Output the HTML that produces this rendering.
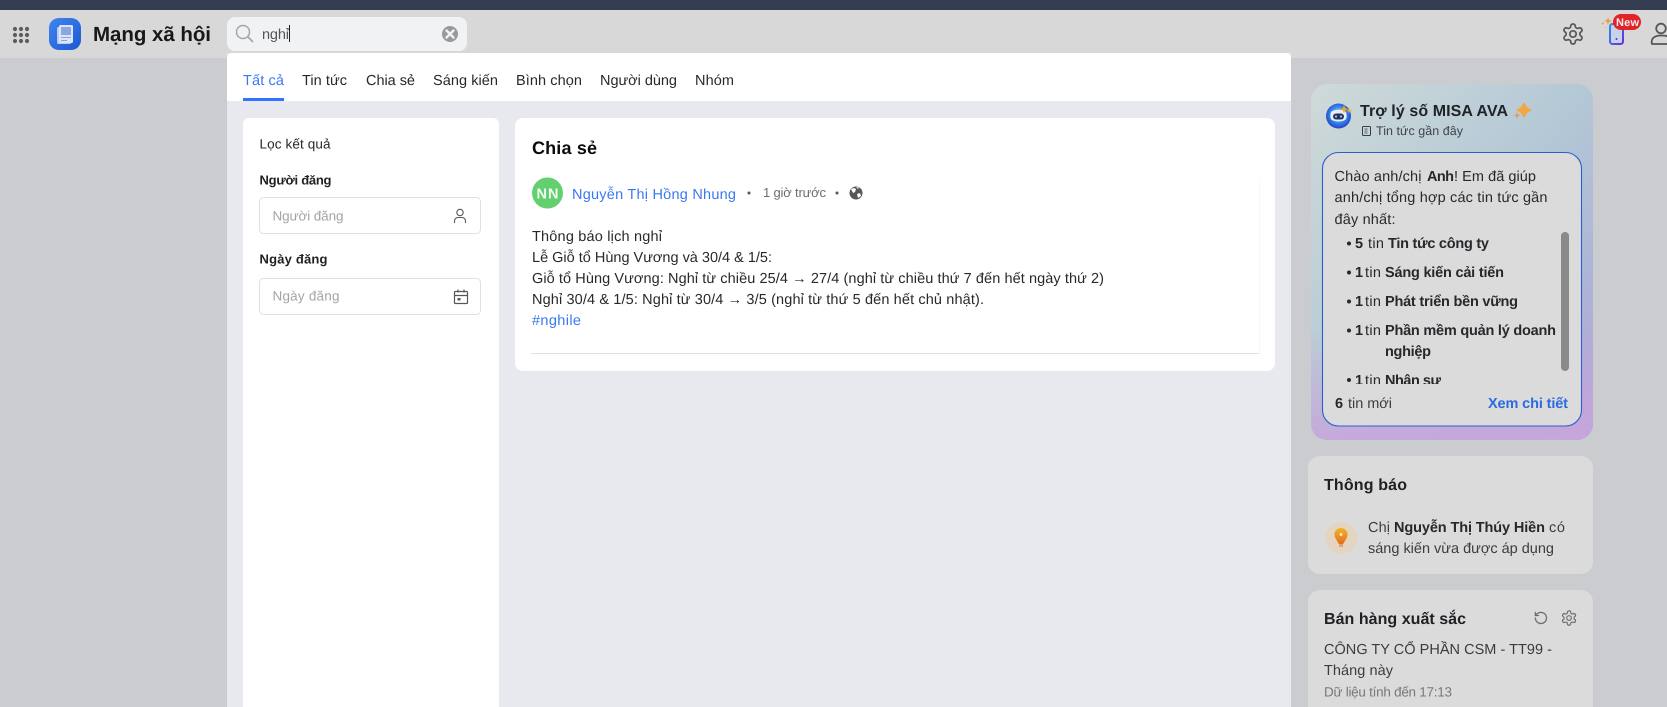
<!DOCTYPE html>
<html lang="vi"><head><meta charset="utf-8"><title>Mạng xã hội</title>
<style>
html,body{margin:0;padding:0;width:1667px;height:707px;overflow:hidden;background:#cbccd0}
svg{display:block}
text{font-family:"Liberation Sans",Arial,sans-serif;font-size:14.5px;fill:#26282c;text-rendering:geometricPrecision}
.b{font-weight:700}
.g{fill:#6b6d72}
.ph{fill:#a2a4a8}
.s{font-size:13.5px}
.bs{font-size:13px}
.blue{fill:#3a78f2}
</style></head><body>
<svg width="1667" height="707" viewBox="0 0 1667 707" xmlns="http://www.w3.org/2000/svg">
<defs>
<linearGradient id="ava" x1="0" y1="0" x2="1" y2="1"><stop offset="0" stop-color="#cfdad9"/><stop offset=".5" stop-color="#b3c8d6"/><stop offset=".75" stop-color="#acb6d6"/><stop offset="1" stop-color="#b8a0d6"/></linearGradient>
<linearGradient id="ava2" x1="0" y1="0" x2="0" y2="1"><stop offset=".7" stop-color="#c8a6dc" stop-opacity="0"/><stop offset="1" stop-color="#c8a6dc" stop-opacity=".9"/></linearGradient>
<linearGradient id="logo" x1="0" y1="0" x2="1" y2="1"><stop offset="0" stop-color="#3e86ee"/><stop offset="1" stop-color="#1d58d2"/></linearGradient>
<linearGradient id="ph" x1="0" y1="0" x2="1" y2="1"><stop offset="0" stop-color="#2f8fe0"/><stop offset="1" stop-color="#6a2fe0"/></linearGradient>
<radialGradient id="bot" cx=".5" cy=".45" r=".55"><stop offset="0" stop-color="#bfe3ff"/><stop offset=".6" stop-color="#2f86ee"/><stop offset="1" stop-color="#2a3fc4"/></radialGradient>
<linearGradient id="bulb" x1="0" y1="0" x2="0" y2="1"><stop offset="0" stop-color="#f2b420"/><stop offset="1" stop-color="#e56b20"/></linearGradient>
<clipPath id="listclip"><rect x="1330" y="160" width="235" height="224"/></clipPath>
</defs>

<!-- page -->
<rect width="1667" height="707" fill="#cbccd0"/>
<rect width="1667" height="58" fill="#d8d8d8"/>
<rect width="1667" height="10" fill="#343d50"/>

<!-- grid -->
<g fill="#5d5d5d"><circle cx="15" cy="29" r="2.100"/><circle cx="21" cy="29" r="2.100"/><circle cx="27" cy="29" r="2.100"/><circle cx="15" cy="35" r="2.100"/><circle cx="21" cy="35" r="2.100"/><circle cx="27" cy="35" r="2.100"/><circle cx="15" cy="41" r="2.100"/><circle cx="21" cy="41" r="2.100"/><circle cx="27" cy="41" r="2.100"/></g>

<!-- logo -->
<rect x="49" y="18" width="32" height="32" rx="10" fill="url(#logo)"/>
<rect x="57" y="27" width="14" height="17" rx="1.500" fill="#b9cdf3"/>
<rect x="59" y="25" width="14" height="18" rx="1.500" fill="#dbe5f8"/>
<rect x="61" y="27" width="10" height="8" fill="#8da6e2"/>
<rect x="61" y="37" width="10" height="1" fill="#8da6e2"/>
<rect x="61" y="40" width="6" height="1" fill="#8da6e2"/>

<text x="93" y="41" class="b" style="font-size:20.500px;fill:#17181a" textLength="118">Mạng xã hội</text>

<!-- search -->
<rect x="227" y="17" width="240" height="34" rx="8" fill="#f1f2f4"/>
<circle cx="243" cy="32" r="6.500" fill="none" stroke="#a6a6a6" stroke-width="1.500"/>
<path d="M248 37l4.500 4.500" stroke="#a6a6a6" stroke-width="1.700" stroke-linecap="round"/>
<text x="262" y="39" style="fill:#555" textLength="27">nghỉ</text>
<rect x="289" y="25" width="1" height="17" fill="#222"/>
<circle cx="450" cy="34" r="8" fill="#999"/>
<path d="M446.500 30.500l7 7M453.500 30.500l-7 7" stroke="#f1f2f4" stroke-width="2.400" stroke-linecap="round"/>

<!-- header right icons -->
<g transform="translate(1561 22)" fill="none" stroke="#55575b" stroke-width="1.700" stroke-linejoin="round">
<path d="M12.220 2h-.44a2 2 0 0 0-2 2v.18a2 2 0 0 1-1 1.730l-.43.25a2 2 0 0 1-2 0l-.15-.08a2 2 0 0 0-2.730.73l-.22.38a2 2 0 0 0 .73 2.730l.15.1a2 2 0 0 1 1 1.720v.51a2 2 0 0 1-1 1.740l-.15.09a2 2 0 0 0-.73 2.730l.22.38a2 2 0 0 0 2.730.73l.15-.08a2 2 0 0 1 2 0l.43.25a2 2 0 0 1 1 1.730V20a2 2 0 0 0 2 2h.44a2 2 0 0 0 2-2v-.18a2 2 0 0 1 1-1.730l.43-.25a2 2 0 0 1 2 0l.15.08a2 2 0 0 0 2.730-.73l.22-.39a2 2 0 0 0-.73-2.730l-.15-.08a2 2 0 0 1-1-1.740v-.5a2 2 0 0 1 1-1.740l.15-.09a2 2 0 0 0 .73-2.730l-.22-.38a2 2 0 0 0-2.730-.73l-.15.08a2 2 0 0 1-2 0l-.43-.25a2 2 0 0 1-1-1.730V4a2 2 0 0 0-2-2z"/>
<circle cx="12" cy="12" r="3.200"/>
</g>
<rect x="1610" y="24" width="13" height="20" rx="2.500" fill="#c6d3ec" stroke="url(#ph)" stroke-width="2"/>
<circle cx="1616.500" cy="39" r="1" fill="#3f3fe0"/>
<path d="M1608 17l1 3 3 1-3 1-1 3-1-3-3-1 3-1z" fill="#ee9a4a"/>
<circle cx="1603" cy="23.500" r="1" fill="#ee9a4a"/><circle cx="1606" cy="27.500" r=".8" fill="#f0b090"/>
<rect x="1613" y="14" width="28" height="16" rx="8" fill="#e0242a"/>
<text x="1616" y="26" class="b" style="font-size:11px;fill:#f4eded" textLength="23">New</text>
<g fill="none" stroke="#55575b" stroke-width="1.800"><circle cx="1661" cy="28.500" r="4.800"/><path d="M1652 44c-1.500-5 2-8.500 9-8.500s15 2 15 8.500z"/></g>

<!-- panel -->
<rect x="227" y="53" width="1064" height="654" fill="#e8e9ee"/>
<path d="M227 101V58a5 5 0 0 1 5-5h1054a5 5 0 0 1 5 5v43z" fill="#fff"/>
<text x="243" y="85" style="fill:#3a78f2" textLength="41">Tất cả</text>
<text x="302" y="85" textLength="45">Tin tức</text>
<text x="366" y="85" textLength="49">Chia sẻ</text>
<text x="433" y="85" textLength="65">Sáng kiến</text>
<text x="516" y="85" textLength="66">Bình chọn</text>
<text x="600" y="85" textLength="77">Người dùng</text>
<text x="695" y="85" textLength="39">Nhóm</text>
<rect x="243" y="98" width="41" height="3" fill="#2f74ff"/>

<!-- filter -->
<path d="M243 707V124a6 6 0 0 1 6-6h244a6 6 0 0 1 6 6v583z" fill="#fff"/>
<text x="259.500" y="148.500" class="s" textLength="71">Lọc kết quả</text>
<text x="259.500" y="184.500" class="b bs" style="fill:#1e2024" textLength="72">Người đăng</text>
<rect x="259.500" y="197.500" width="221" height="36" rx="4" fill="#fff" stroke="#dfe0e4"/>
<text x="272.500" y="220.500" class="ph s" textLength="71">Người đăng</text>
<g fill="none" stroke="#55575b" stroke-width="1.100"><circle cx="460" cy="212.500" r="3.200"/><path d="M454.500 223v-2a3.500 3.500 0 0 1 3.500-3.500h4a3.500 3.500 0 0 1 3.500 3.500v2"/></g>
<text x="259.500" y="263.500" class="b bs" style="fill:#1e2024" textLength="68">Ngày đăng</text>
<rect x="259.500" y="278.500" width="221" height="36" rx="4" fill="#fff" stroke="#dfe0e4"/>
<text x="272.500" y="300.500" class="ph s" textLength="67">Ngày đăng</text>
<g fill="none" stroke="#55575b" stroke-width="1.200"><rect x="454.500" y="291.500" width="13" height="12" rx="1"/><path d="M454.500 295.500h13M458 289.500v3M464 289.500v3"/></g>
<rect x="457.500" y="298" width="3" height="2.500" fill="#55575b"/>

<!-- main card -->
<rect x="515" y="118" width="760" height="253" rx="8" fill="#fff"/>
<text x="532" y="154" class="b" style="font-size:18px;fill:#0c0c0e" textLength="65">Chia sẻ</text>
<circle cx="547.500" cy="193" r="15.500" fill="#62d06f"/>
<text x="536.500" y="198.500" class="b" style="font-size:14.500px;fill:#f3fbf4" textLength="22">NN</text>
<text x="572" y="199" class="blue" textLength="164">Nguyễn Thị Hồng Nhung</text>
<circle cx="749" cy="193" r="1.500" fill="#555"/>
<text x="763" y="197" class="g bs" textLength="63">1 giờ trước</text>
<circle cx="837" cy="193" r="1.500" fill="#555"/>
<circle cx="856" cy="193" r="6.500" fill="#55575b"/>
<path d="M851 189l3-1 2 1-1 3-2 1zM857 194l3-1 1 3-3 2zM856 187l3 .5-1 1.500z" fill="#fff"/>
<text x="532" y="241" textLength="130">Thông báo lịch nghỉ</text>
<text x="532" y="262" textLength="240">Lễ Giỗ tổ Hùng Vương và 30/4 &amp; 1/5:</text>
<text x="532" y="283" textLength="572">Giỗ tổ Hùng Vương: Nghỉ từ chiều 25/4 → 27/4 (nghỉ từ chiều thứ 7 đến hết ngày thứ 2)</text>
<text x="532" y="304" textLength="452">Nghỉ 30/4 &amp; 1/5: Nghỉ từ 30/4 → 3/5 (nghỉ từ thứ 5 đến hết chủ nhật).</text>
<text x="532" y="325" class="blue" textLength="49">#nghile</text>
<rect x="531" y="353" width="728" height="1" fill="#dfe0e3"/>
<rect x="1259" y="179" width="1" height="175" fill="#f8f8f9"/>

<!-- AVA card -->
<rect x="1311" y="84" width="282" height="356" rx="16" fill="url(#ava)"/>
<rect x="1311" y="84" width="282" height="356" rx="16" fill="url(#ava2)"/>
<circle cx="1338.500" cy="116" r="12.500" fill="url(#bot)"/>
<path d="M1331 112c3-3 12-3 15 0 1 3 1 7-1 8-3 2-10 2-13 0-2-1-2-5-1-8z" fill="#e6eef8"/>
<rect x="1333" y="113.500" width="11" height="6" rx="3" fill="#26325a"/>
<circle cx="1336" cy="116.500" r="1.100" fill="#8fc0ff"/><circle cx="1341" cy="116.500" r="1.100" fill="#8fc0ff"/>
<path d="M1344 105l1.200 3 3 1.200-3 1.200-1.200 3-1.200-3-3-1.200 3-1.200z" fill="#eeaa20"/>
<path d="M1349 108l.8 2 2 .8-2 .8-.8 2-.8-2-2-.8 2-.8z" fill="#eeaa20"/>
<text x="1360" y="116" class="b" style="font-size:16px;fill:#1f2226" textLength="148">Trợ lý số MISA AVA</text>
<path d="M1524 102l3 5 5 3-5 3-3 5-3-5-5-3 5-3z" fill="#efa845"/>
<path d="M1517 112l1 2.500 2.500 1-2.500 1-1 2.500-1-2.500-2.500-1 2.500-1z" fill="#e89a60"/>
<rect x="1362.500" y="126.500" width="8" height="9" rx="1" fill="none" stroke="#3a3d42"/>
<path d="M1364.500 129h3M1364.500 131h3M1364.500 133h3" stroke="#3a3d42" stroke-width=".8"/>
<text x="1376" y="135" style="font-size:12.500px;fill:#40444a" textLength="87">Tin tức gần đây</text>

<rect x="1322.500" y="152.500" width="259" height="273.500" rx="16" fill="#dbdbdb" stroke="#2c5ed0" stroke-width="1.100"/>
<text x="1334.500" y="181" textLength="87">Chào anh/chị</text>
<text x="1427" y="181" class="b" textLength="27">Anh</text>
<text x="1454" y="181" textLength="82">! Em đã giúp</text>
<text x="1334.500" y="202" textLength="213">anh/chị tổng hợp các tin tức gần</text>
<text x="1334.500" y="224" textLength="61">đây nhất:</text>
<g clip-path="url(#listclip)">
<circle cx="1349" cy="243.500" r="2" fill="#26282c"/>
<text x="1355" y="248" class="b" textLength="8">5</text>
<text x="1368" y="248" textLength="16">tin</text>
<text x="1388" y="248" class="b" textLength="101">Tin tức công ty</text>
<circle cx="1349" cy="272.500" r="2" fill="#26282c"/>
<text x="1355" y="277" class="b" textLength="6">1</text>
<text x="1365" y="277" textLength="16">tin</text>
<text x="1385" y="277" class="b" textLength="119">Sáng kiến cải tiến</text>
<circle cx="1349" cy="301.500" r="2" fill="#26282c"/>
<text x="1355" y="306" class="b" textLength="6">1</text>
<text x="1365" y="306" textLength="16">tin</text>
<text x="1385" y="306" class="b" textLength="133">Phát triển bền vững</text>
<circle cx="1349" cy="330.500" r="2" fill="#26282c"/>
<text x="1355" y="335" class="b" textLength="6">1</text>
<text x="1365" y="335" textLength="16">tin</text>
<text x="1385" y="335" class="b" textLength="171">Phần mềm quản lý doanh</text>
<text x="1385" y="356" class="b" textLength="46">nghiệp</text>
<circle cx="1349" cy="380" r="2" fill="#26282c"/>
<text x="1355" y="385" class="b" textLength="6">1</text>
<text x="1365" y="385" textLength="16">tin</text>
<text x="1385" y="385" class="b" textLength="56">Nhân sự</text>
</g>
<rect x="1561" y="232" width="8" height="139" rx="4" fill="#8a8a8a"/>
<text x="1335" y="408" class="b" textLength="9">6</text>
<text x="1348" y="408" style="fill:#3a3c40" textLength="44">tin mới</text>
<text x="1488" y="408" class="b" style="fill:#2c6ae0" textLength="80">Xem chi tiết</text>

<!-- Thông báo -->
<rect x="1308" y="456" width="285" height="118" rx="12" fill="#dbdbdb"/>
<text x="1324" y="490" class="b" style="font-size:16px;fill:#1f2024" textLength="83">Thông báo</text>
<circle cx="1341" cy="538" r="16" fill="#e3d5bf"/>
<path d="M1341 528c-4 0-6.500 3-6.500 6.500 0 4 3.500 7 4.500 10h4c1-3 4.500-6 4.500-10 0-3.500-2.500-6.500-6.500-6.500z" fill="url(#bulb)"/>
<circle cx="1341" cy="534.500" r="1.500" fill="#f8e8d0"/>
<rect x="1339" y="545" width="4" height="2" fill="#e6a07a"/>
<text x="1368" y="532" style="fill:#3a3c40" textLength="22">Chị</text>
<text x="1394" y="532" class="b" textLength="151">Nguyễn Thị Thúy Hiền</text>
<text x="1549" y="532" style="fill:#3a3c40" textLength="16">có</text>
<text x="1368" y="553" style="fill:#3a3c40" textLength="186">sáng kiến vừa được áp dụng</text>

<!-- Bán hàng -->
<path d="M1308 707V602a12 12 0 0 1 12-12h261a12 12 0 0 1 12 12v105z" fill="#dbdbdb"/>
<text x="1324" y="624" class="b" style="font-size:16px;fill:#1f2024" textLength="142">Bán hàng xuất sắc</text>
<g transform="translate(1533.500 610.500) scale(.62)" fill="none" stroke="#6a6c70" stroke-width="2" stroke-linecap="round" stroke-linejoin="round"><path d="M3 12a9 9 0 1 0 9-9 9.750 9.750 0 0 0-6.740 2.740L3 8"/><path d="M3 3v5h5"/></g>
<g transform="translate(1560.400 609.400) scale(.72)" fill="none" stroke="#6a6c70" stroke-width="1.600" stroke-linejoin="round">
<path d="M12.220 2h-.44a2 2 0 0 0-2 2v.18a2 2 0 0 1-1 1.730l-.43.25a2 2 0 0 1-2 0l-.15-.08a2 2 0 0 0-2.730.73l-.22.38a2 2 0 0 0 .73 2.730l.15.1a2 2 0 0 1 1 1.720v.51a2 2 0 0 1-1 1.740l-.15.09a2 2 0 0 0-.73 2.730l.22.38a2 2 0 0 0 2.730.73l.15-.08a2 2 0 0 1 2 0l.43.25a2 2 0 0 1 1 1.730V20a2 2 0 0 0 2 2h.44a2 2 0 0 0 2-2v-.18a2 2 0 0 1 1-1.730l.43-.25a2 2 0 0 1 2 0l.15.08a2 2 0 0 0 2.730-.73l.22-.39a2 2 0 0 0-.73-2.730l-.15-.08a2 2 0 0 1-1-1.740v-.5a2 2 0 0 1 1-1.740l.15-.09a2 2 0 0 0 .73-2.730l-.22-.38a2 2 0 0 0-2.730-.73l-.15.08a2 2 0 0 1-2 0l-.43-.25a2 2 0 0 1-1-1.730V4a2 2 0 0 0-2-2z"/>
<circle cx="12" cy="12" r="3.200"/></g>
<text x="1324" y="654" style="fill:#3a3c40" textLength="228">CÔNG TY CỔ PHẦN CSM - TT99 -</text>
<text x="1324" y="675" style="fill:#3a3c40" textLength="69">Tháng này</text>
<text x="1324" y="696.500" class="s" style="fill:#76787c" textLength="128">Dữ liệu tính đến 17:13</text>
</svg>
</body></html>
